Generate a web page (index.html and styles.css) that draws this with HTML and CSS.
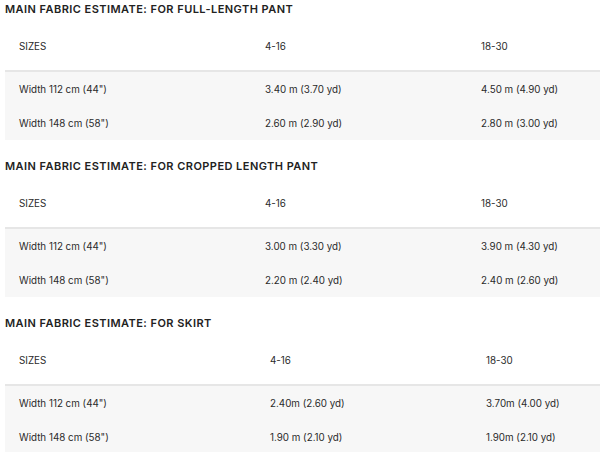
FILE: index.html
```html
<!DOCTYPE html>
<html>
<head>
<meta charset="utf-8">
<link rel="stylesheet" href="styles.css">
</head>
<body>
<div class="page">
  <h3 class="title">MAIN FABRIC ESTIMATE: FOR FULL-LENGTH PANT</h3>
  <table class="est">
    <thead>
      <tr><th class="c1">SIZES</th><th class="c2">4-16</th><th class="c3">18-30</th></tr>
    </thead>
    <tbody>
      <tr><td>Width 112 cm (44")</td><td>3.40 m (3.70 yd)</td><td>4.50 m (4.90 yd)</td></tr>
      <tr><td>Width 148 cm (58")</td><td>2.60 m (2.90 yd)</td><td>2.80 m (3.00 yd)</td></tr>
    </tbody>
  </table>

  <h3 class="title">MAIN FABRIC ESTIMATE: FOR CROPPED LENGTH PANT</h3>
  <table class="est">
    <thead>
      <tr><th class="c1">SIZES</th><th class="c2">4-16</th><th class="c3">18-30</th></tr>
    </thead>
    <tbody>
      <tr><td>Width 112 cm (44")</td><td>3.00 m (3.30 yd)</td><td>3.90 m (4.30 yd)</td></tr>
      <tr><td>Width 148 cm (58")</td><td>2.20 m (2.40 yd)</td><td>2.40 m (2.60 yd)</td></tr>
    </tbody>
  </table>

  <h3 class="title">MAIN FABRIC ESTIMATE: FOR SKIRT</h3>
  <table class="est est-wide">
    <thead>
      <tr><th class="c1">SIZES</th><th class="c2">4-16</th><th class="c3">18-30</th></tr>
    </thead>
    <tbody>
      <tr><td>Width 112 cm (44")</td><td>2.40m (2.60 yd)</td><td>3.70m (4.00 yd)</td></tr>
      <tr><td>Width 148 cm (58")</td><td>1.90 m (2.10 yd)</td><td>1.90m (2.10 yd)</td></tr>
    </tbody>
  </table>
</div>
</body>
</html>
```

FILE: styles.css
```css
html, body {
  margin: 0;
  padding: 0;
  background: #ffffff;
}
.page {
  padding: 0 0 0 5px;
  font-family: "Inter", "Open Sans", sans-serif;
  color: #2a2a2a;
}
.title {
  margin: 17px 0 4px 0;
  height: 18px;
  line-height: 18px;
  font-size: 11px;
  font-weight: 600;
  letter-spacing: 0.45px;
  color: #222222;
}
.title:first-child {
  margin-top: 0;
}
.est {
  width: 600px;
  border-collapse: collapse;
  table-layout: fixed;
  font-size: 9.8px;
}
.est th, .est td {
  text-align: left;
  padding: 0 0 0 14px;
  white-space: nowrap;
}
.est th {
  height: 48px;
  font-weight: 400;
  border-bottom: 2px solid #e6e6e6;
}
.est td {
  height: 34px;
  background: #f7f7f7;
}
.est .c1 { width: 232px; }
.est .c2 { width: 202px; }
.est-wide .c1 { width: 237px; }
.est-wide .c2 { width: 202px; }
```
